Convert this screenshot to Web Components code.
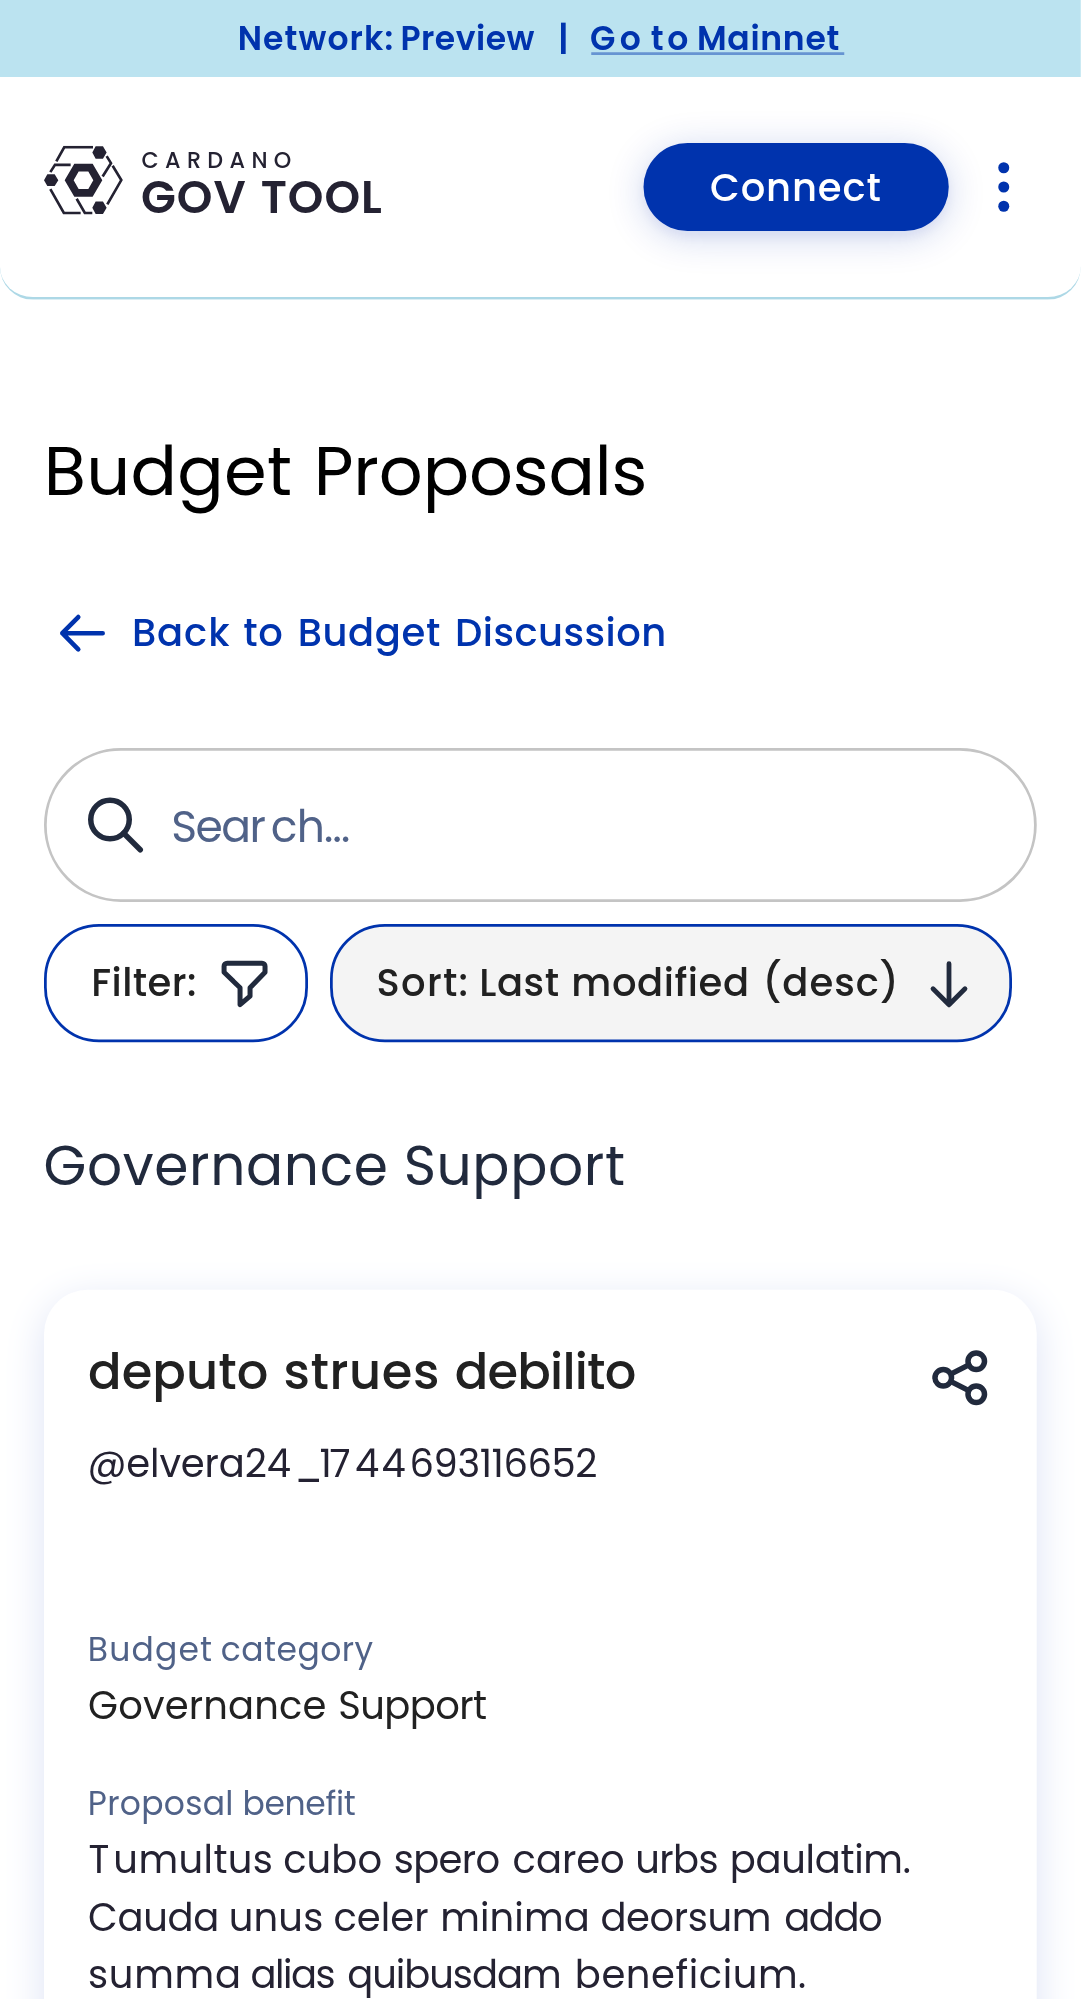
<!DOCTYPE html>
<html lang="en">
<head>
<meta charset="utf-8">
<title>Budget Proposals</title>
<style>
html,body{margin:0;background:#fff}
body{height:1999px;overflow:hidden;font-family:Poppins,Inter,"Liberation Sans",sans-serif;color:#242232}
</style>
</head>
<body>
<gov-app></gov-app>
<script>
const define=(name,markup,after)=>customElements.define(name,class extends HTMLElement{
  connectedCallback(){
    if(this.shadowRoot)return;
    const t=document.createElement('template');t.innerHTML=markup;
    this.attachShadow({mode:'open'}).append(t.content.cloneNode(true));
    if(after)after(this);
  }
});

// A line of text set run by run. "runs" lists the ink start and end of each run in device pixels,
// "o" is the device x of the element's left edge (the first start when absent).
// Runs are split at spaces and at "~". "dy" nudges the baseline.
const SCALE=2.75,EDGE=.7,ctx=document.createElement('canvas').getContext('2d');
define('run-text',`<style>:host{display:block;flex:none}svg{display:block;overflow:visible}text{font-kerning:none;font-variant-ligatures:none}</style><svg><text fill="currentColor"></text></svg>`,el=>{
  const cs=getComputedStyle(el),fs=parseFloat(cs.fontSize),lh=parseFloat(cs.lineHeight);
  const text=el.getAttribute('text'),e=el.getAttribute('runs').trim().split(/\s+/).map(Number);
  const o=el.hasAttribute('o')?+el.getAttribute('o'):e[0];
  ctx.font=cs.fontWeight+' '+(fs*10)+'px '+cs.fontFamily;
  const xs=[];let k=0;
  for(const part of text.split(/([ ~])/)){
    if(part==='~')continue;
    if(part===' '){xs.push((e[k*2-1]-o)/SCALE);continue}
    const a=(e[k*2]+EDGE-o)/SCALE,b=(e[k*2+1]-EDGE-o)/SCALE,m=ctx.measureText(part),n=part.length;
    const L=-m.actualBoundingBoxLeft/10,R=m.actualBoundingBoxRight/10;
    const gap=n>1?((b-a)-(R-L))/(n-1):0;
    for(let i=0;i<n;i++)xs.push(a-L+(ctx.measureText(part.slice(0,i+1)).width-ctx.measureText(part[i]).width)/10+gap*i);
    k++;
  }
  const up=Math.round(fs*1.05),down=Math.round(fs*.35);
  const svg=el.shadowRoot.querySelector('svg'),t=el.shadowRoot.querySelector('text');
  svg.setAttribute('width',(e[e.length-1]-o)/SCALE);svg.setAttribute('height',lh);
  t.setAttribute('x',xs.map(v=>v.toFixed(3)).join(' '));
  t.setAttribute('y',Math.floor((lh-up-down)/2)+up+(+el.getAttribute('dy')||0));
  t.textContent=text.replace(/~/g,'');
});

define('network-banner',`<style>
:host{display:flex;height:28px;background:#bbe3f0;color:#0033ad;font-size:12px;line-height:27px;font-weight:600}
run-text.link{background:linear-gradient(rgba(0,51,173,.45),rgba(0,51,173,.45)) .5px 19px/92px 1px no-repeat;width:93px;margin-left:214px}
.first{width:0}
</style><run-text class="first" text="Network: Preview |" o="0" runs="239.2 392.300 401.900 535 560.300 564.700"></run-text><run-text class="link" text="Go to Mainnet" o="588.500" runs="590.500 640.500 650.800 688 698.400 839"></run-text>`);

define('gov-logo',`<style>
:host{display:flex;gap:7px;color:#242232}
.words{display:flex;flex-direction:column}
.a{font-size:8.1px;line-height:10px;font-weight:500}
.b{font-size:16.5px;line-height:17px;font-weight:600;margin-top:1px}
svg{display:block}
</style>
<svg width="28.6" height="25" viewBox="42 47 236 206"><g fill="#242232">
<path fill-rule="evenodd" d="M104 150L133 101H188L217 150L188 200H133ZM131 150L146 177H175L190 150L175 124H146Z"/>
<path d="M42 150L52 132H74L85 150L74 168H52ZM187 67L197 48H219L230 67L219 86H197ZM187 233L197 214H219L230 233L219 252H197Z"/></g>
<g fill="none" stroke="#242232" stroke-width="8"><path d="M79 94L103 51H189"/><path d="M61 126L75 104H122"/><path d="M230 78L243 99L218 139"/><path d="M248 107L274 150L232 223"/><path d="M61 177L102 249H152"/><path d="M140 206L165 249H187"/></g></svg>
<div class="words"><run-text class="a" text="CARDANO" o="143.700" runs="142.300 292"></run-text><run-text class="b" dy="-.4" text="GOV TOOL" o="143.700" runs="142.300 246.500 262 382.500"></run-text></div>`);

define('gov-header',`<style>
:host{display:flex;box-sizing:border-box;height:81px;padding:24px 16px 0;border-bottom:1px solid #add8e6;border-radius:0 0 12px 12px;justify-content:space-between;align-items:flex-start}
gov-logo{margin-top:1px}
.right{display:flex;align-items:center;gap:8px}
.btn{display:flex;width:111px;height:32px;border-radius:16px;background:#0033ad;color:#fff;font-size:14px;line-height:32px;font-weight:500;box-shadow:0 2px 14px rgba(0,51,173,.2),0 2px 5px rgba(0,51,173,.06)}
svg{display:block}
</style><gov-logo></gov-logo>
<div class="right"><div class="btn"><run-text text="Connect" o="643.500" runs="710.700 880.300"></run-text></div>
<svg width="24" height="24" fill="#0033ad"><circle cx="12" cy="5" r="2"/><circle cx="12" cy="12" r="2"/><circle cx="12" cy="19" r="2"/></svg></div>`);

define('back-link',`<style>
:host{display:flex;align-items:center;gap:9px;height:20px;padding-left:5px;color:#0033ad;font-size:14px;line-height:20px;font-weight:500}
svg{overflow:visible}
</style><svg width="18" height="14.5" viewBox="-1.500 0 49.500 40" fill="none" stroke="#0033ad" stroke-width="4.600" stroke-linecap="round" stroke-linejoin="round"><path d="M43.500 20H3M19 3.800L3 20L19 36.200"/></svg>
<run-text text="Back to Budget Discussion" o="132" runs="134 230 243.400 282 299.700 439.800 457 664.500"></run-text>`);

define('search-field',`<style>
:host{display:flex;align-items:center;box-sizing:border-box;height:56px;border:1px solid #c4c4c4;border-radius:28px;padding-left:13px;gap:8px;color:#506288;font-size:16px;line-height:23px}
run-text{margin-top:1px}
</style><svg width="24" height="24" fill="none" stroke="#212a3d" stroke-width="2" stroke-linecap="round"><circle cx="10" cy="10" r="7"/><path d="M15 15L21 21"/></svg>
<run-text text="Sear~ch..." o="170.500" runs="173 265.500 271.700 349"></run-text>`);

define('pill-button',`<style>
:host{display:flex;align-items:center;box-sizing:border-box;height:43px;border:1px solid #0033ad;border-radius:20px;padding:0 13px 0 16px;justify-content:space-between}
::slotted(run-text){margin-bottom:1px}
::slotted(svg){margin-top:.6px;overflow:visible}
</style><slot></slot><slot name="icon"></slot>`);

define('proposal-card',`<style>
:host{display:block;box-sizing:border-box;height:300px;padding:17px 16px 0;border-radius:16px;background:#fff;box-shadow:0 4px 15px #dde3f5}
.head{display:flex;justify-content:space-between;height:25px}
.head svg{margin-top:3px}
.title{font-size:18px;line-height:25px;font-weight:500;color:#212121}
.user,.value,.para{font-size:14px;line-height:20px}
.user{margin-top:11px}
.label{font-size:12px;line-height:17px;color:#506288}
.value{margin-top:2px;color:#212121}
.para{display:flex;flex-direction:column;gap:1px;margin-top:2px}
</style>
<div class="head"><run-text class="title" text="deputo strues debilito" o="88" runs="89 267.100 285 437.800 455.600 635.200"></run-text>
<svg width="24" height="24" fill="none" stroke="#212a3d" stroke-width="2"><circle cx="6" cy="12" r="3"/><circle cx="18" cy="6" r="3"/><circle cx="18" cy="18" r="3"/><path d="M8.700 10.700L15.300 7.300M8.700 13.300L15.300 16.700"/></svg></div>
<run-text class="user" text="@elvera24~_~17~44~693116652" o="88" runs="89.500 290.500 297.700 318.600 320.200 349.600 355.600 405.400 411.600 596.500"></run-text>
<run-text class="label" style="margin-top:49px" text="Budget category" o="88" runs="89.600 211.800 221.500 373.400"></run-text>
<run-text class="value" text="Governance Support" o="88" runs="89 325.500 339.500 486.600"></run-text>
<run-text class="label" style="margin-top:17px" text="Proposal benefit" o="88" runs="89.600 231.800 244.200 355.400"></run-text>
<div class="para">
<run-text text="T~umultus cubo spero careo urbs paulatim." o="88" runs="89 107.100 115.400 271.700 284.100 381.200 394.700 499.400 513.500 623.900 637.300 717.400 731.900 910"></run-text>
<run-text text="Cauda unus celer minima deorsum addo" o="88" runs="89 217 230.800 322 334.400 428.400 442.200 587.600 601.400 769.500 785.300 881.700"></run-text>
<run-text text="summa alias quibusdam beneficium." o="88" runs="89 238.700 251.400 334.400 348.200 559.700 576.900 805.400"></run-text>
</div>`);

define('gov-app',`<style>
:host{display:block;width:393.09px;transform:scale(2.75);transform-origin:0 0}
main{padding:0 16px}
.title{font-size:25px;line-height:31px;color:#000;margin-top:47px}
back-link{margin-top:33px}
search-field{margin-top:32px}
.pills{display:flex;gap:8px;margin-top:8px}
.pills run-text{font-size:14px;line-height:20px;font-weight:500;color:#212121}
.f{width:96px}.s{width:248px;background:#f4f4f4}
.group{font-size:20px;line-height:28px;color:#212a3d;margin:31px 0}
</style>
<network-banner></network-banner><gov-header></gov-header>
<main>
<run-text class="title" text="Budget Proposals" o="44" runs="48.200 290.500 318.200 644.700"></run-text>
<back-link></back-link>
<search-field></search-field>
<div class="pills">
<pill-button class="f"><run-text text="Filter:" o="90.750" runs="93.300 195.400"></run-text><svg slot="icon" width="17" height="17.45" viewBox="1.200 0 46.750 48" fill="none" stroke="#212a3d" stroke-width="5" stroke-linejoin="round"><path d="M5.500 3.500H40.500a3 3 0 0 1 3 3V12.500L28.500 28V36.500L18.500 45V28L2.500 12.500V6.500a3 3 0 0 1 3-3Z"/></svg></pill-button>
<pill-button class="s"><run-text text="Sort: Last modified (desc)" o="376.750" runs="378 467 481.400 558.600 573.400 747 766.400 894.800"></run-text><svg slot="icon" width="18" height="17.45" viewBox="-.800 0 49.500 48" fill="none" stroke="#212a3d" stroke-width="4.800" stroke-linecap="round" stroke-linejoin="round"><path d="M24.200 4V45M8.200 29L24.200 45L40.200 29"/></svg></pill-button>
</div>
<run-text class="group" text="Governance Support" o="44" runs="45 386.300 406 624"></run-text>
<proposal-card></proposal-card>
</main>`);
</script>
</body>
</html>
